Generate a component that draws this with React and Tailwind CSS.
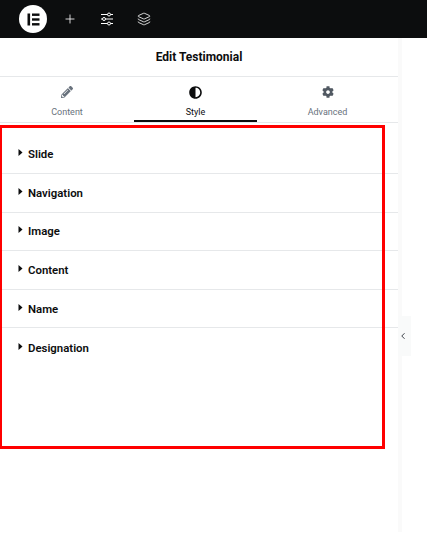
import { Plus, Layers, ChevronLeft } from 'lucide-react';
import { FaPencilAlt, FaAdjust, FaCog } from 'react-icons/fa';

const sections = ['Slide', 'Navigation', 'Image', 'Content', 'Name', 'Designation'];

const ElementorLogo = () => (
  <div className="flex h-7 w-7 items-center justify-center rounded-full bg-white">
    <svg width="13" height="13" viewBox="0 0 13 13" fill="#0c0d0e">
      <rect x="0.5" y="0.5" width="2.6" height="12" />
      <rect x="5" y="0.5" width="7.5" height="2.4" />
      <rect x="5" y="5.3" width="7.5" height="2.4" />
      <rect x="5" y="10.1" width="7.5" height="2.4" />
    </svg>
  </div>
);

const Sliders = () => (
  <svg width="14" height="14" viewBox="0 0 14 14" fill="none" stroke="currentColor" strokeWidth="1">
    <path d="M1 2.5h6.5M10.5 2.5H13M1 7h1.5M5.5 7H13M1 11.5h6.5M10.5 11.5H13" />
    <circle cx="9" cy="2.5" r="1.5" />
    <circle cx="4" cy="7" r="1.5" />
    <circle cx="9" cy="11.5" r="1.5" />
  </svg>
);

const Tab = ({ icon, label, active }) => (
  <div className={`relative flex flex-col items-center pt-[8px] ${active ? 'text-[#0c0d0e]' : 'text-[#69727d]'}`}>
    <div className="flex h-[14px] items-center">{icon}</div>
    <span className="mt-[7px] text-[9px] leading-[12px]">{label}</span>
    {active && <div className="absolute bottom-0 left-0 right-0 h-[2px] bg-[#0c0d0e]" />}
  </div>
);

const Section = ({ label }) => (
  <div className="flex h-[38.6px] items-center border-b border-[#e6e8ea] pt-[1px] pl-[18px] last:border-b-0">
    <svg width="5" height="7" viewBox="0 0 5 7" className="mr-[5px] mb-[4px]" fill="#0c0d0e">
      <path d="M0.5 0 4.5 3.5 0.5 7z" />
    </svg>
    <span className="text-[11.4px] font-semibold text-[#0c0d0e]">{label}</span>
  </div>
);

export default function App() {
  return (
    <div className="relative h-[533px] w-[427px] overflow-hidden bg-white font-['Roboto',sans-serif]">
      <header className="flex h-[38px] items-center bg-[#0c0d0e] pl-[19px] text-white">
        <ElementorLogo />
        <div className="ml-[16px] flex items-center gap-[23px]">
          <Plus size={14} strokeWidth={1.4} />
          <Sliders />
          <Layers size={14} strokeWidth={1.4} />
        </div>
      </header>

      <div className="flex h-[494px]">
        <aside className="w-[398px]">
          <div className="flex h-[39px] items-center justify-center border-b border-[#e6e8ea]">
            <h1 className="text-[12px] font-bold text-[#0c0d0e]">Edit Testimonial</h1>
          </div>
          <div className="grid h-[46px] grid-cols-[134px_123px_141px] border-b border-[#e6e8ea]">
            <Tab icon={<FaPencilAlt size={12} className="text-[#69727d]" />} label="Content" />
            <Tab icon={<FaAdjust size={13} />} label="Style" active />
            <Tab icon={<FaCog size={12} className="text-[#515962]" />} label="Advanced" />
          </div>
          <div className="pt-[12.4px]">
            {sections.map((name) => (
              <Section key={name} label={name} />
            ))}
          </div>
        </aside>
        <div className="relative w-[4px] bg-[#fafafa]">
          <div className="absolute left-0 top-[278px] flex h-[40px] w-[13px] items-center justify-center bg-[#f9fafa] pr-[3px] text-[#3f444b]">
            <ChevronLeft size={10} strokeWidth={2.4} />
          </div>
        </div>
      </div>

      {/* annotation box drawn over the panel */}
      <div className="pointer-events-none absolute left-0 top-[125px] h-[324px] w-[385px] border-y-[3px] border-r-[3px] border-l-2 border-[#ff0000]" />
    </div>
  );
}
